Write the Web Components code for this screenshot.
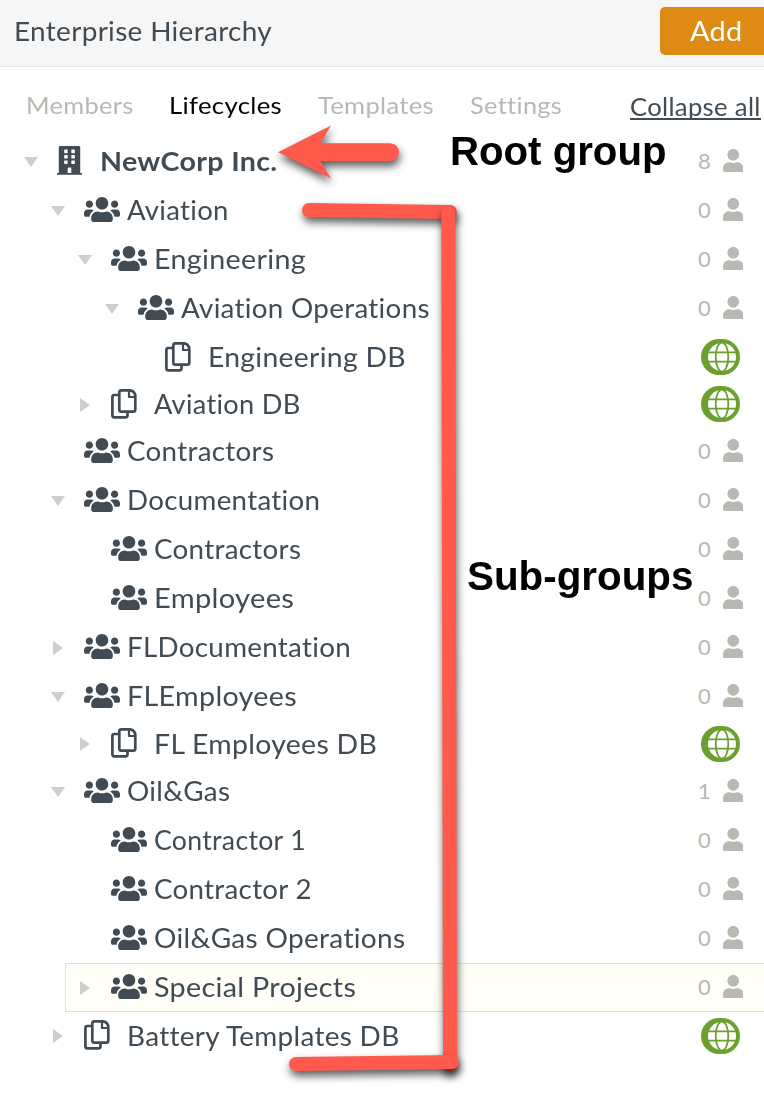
<!DOCTYPE html>
<html lang="en">
<head>
<meta charset="utf-8">
<title>Enterprise Hierarchy</title>
<style>
html,body{margin:0;padding:0;background:#fff;overflow:hidden}
body{font-family:Lato,"Open Sans",sans-serif;color:#414b53;font-variant-ligatures:none}
</style>
</head>
<body>
<hierarchy-app></hierarchy-app>
<script>
const make = (host, html) => {
  const t = document.createElement('template');
  t.innerHTML = html;
  host.attachShadow({mode:'open'}).append(t.content.cloneNode(true));
  return host.shadowRoot;
};

/* Text whose letters widen to fill the width given in "w". */
customElements.define('fit-text', class extends HTMLElement {
  connectedCallback() {
    if (!this.shadowRoot) make(this, `<style>:host{display:inline-block;white-space:nowrap}span{display:inline-block;transform-origin:0 50%}</style><span><slot></slot></span>`);
    const s = this.shadowRoot.querySelector('span');
    const w = +this.getAttribute('w');
    if (w) {
      s.style.transform = `scaleX(${(w / s.offsetWidth).toFixed(4)})`;
      this.style.width = w + 'px';
    }
  }
});

const ICONS = {
  group: [36, 25.2, '0 32 640 448', '<path d="M96 224c35.3 0 64-28.7 64-64s-28.7-64-64-64-64 28.7-64 64 28.7 64 64 64zm448 0c35.3 0 64-28.7 64-64s-28.7-64-64-64-64 28.7-64 64 28.7 64 64 64zm32 32h-64c-17.6 0-33.5 7.1-45.1 18.6 40.3 22.1 68.9 62 75.1 109.4h66c17.7 0 32-14.3 32-32v-32c0-35.3-28.7-64-64-64zm-256 0c61.9 0 112-50.1 112-112S381.9 32 320 32 208 82.1 208 144s50.1 112 112 112zm76.8 32h-8.3c-20.8 10-43.9 16-68.5 16s-47.6-6-68.5-16h-8.3C179.6 288 128 339.6 128 403.2V432c0 26.5 21.5 48 48 48h288c26.5 0 48-21.5 48-48v-28.8c0-63.6-51.6-115.2-115.2-115.2zm-223.7-13.4C161.5 263.1 145.6 256 128 256H64c-35.3 0-64 28.7-64 64v32c0 17.7 14.3 32 32 32h65.9c6.3-47.4 34.9-87.3 75.2-109.4z"/>'],
  user: [20.5, 23.4, '0 0 448 512', '<path d="M224 256c70.7 0 128-57.3 128-128S294.7 0 224 0 96 57.3 96 128s57.3 128 128 128zm89.6 32h-16.7c-22.2 10.2-46.9 16-72.9 16s-50.6-5.8-72.9-16h-16.7C60.2 288 0 348.2 0 422.4V464c0 26.5 21.5 48 48 48h352c26.5 0 48-21.5 48-48v-41.6c0-74.2-60.2-134.4-134.4-134.4z"/>'],
  building: [25, 28.8, '0 0 448 512', '<path fill-rule="evenodd" d="M436 480h-20V24c0-13.3-10.7-24-24-24H56C42.700 0 32 10.700 32 24v456H12c-6.600 0-12 5.400-12 12v20h448v-20c0-6.600-5.400-12-12-12zM128 76c0-6.600 5.400-12 12-12h40c6.600 0 12 5.400 12 12v40c0 6.600-5.400 12-12 12h-40c-6.600 0-12-5.400-12-12zm0 96c0-6.600 5.400-12 12-12h40c6.600 0 12 5.400 12 12v40c0 6.600-5.400 12-12 12h-40c-6.600 0-12-5.400-12-12zm52 148h-40c-6.600 0-12-5.400-12-12v-40c0-6.600 5.400-12 12-12h40c6.600 0 12 5.400 12 12v40c0 6.600-5.400 12-12 12zm76 160h-64v-84c0-6.600 5.400-12 12-12h40c6.600 0 12 5.400 12 12zm64-172c0 6.600-5.400 12-12 12h-40c-6.600 0-12-5.400-12-12v-40c0-6.600 5.400-12 12-12h40c6.600 0 12 5.400 12 12zm0-96c0 6.600-5.400 12-12 12h-40c-6.600 0-12-5.400-12-12v-40c0-6.600 5.400-12 12-12h40c6.600 0 12 5.400 12 12zm0-96c0 6.600-5.400 12-12 12h-40c-6.600 0-12-5.400-12-12V76c0-6.600 5.400-12 12-12h40c6.600 0 12 5.400 12 12z"/>'],
  copy: [26, 30, '0 0 26 30', '<g fill="none" stroke="currentColor" stroke-width="2.7" stroke-linejoin="round"><path d="M8 6H3.200Q1.400 6 1.400 8V26.300Q1.400 28.300 3.200 28.300H14.500Q16.500 28.300 16.500 26.300V23"/><path d="M10.500 1.400H19Q24.300 2.300 24.300 7.500V20.500Q24.300 22.700 22.300 22.700H10.500Q8.300 22.700 8.300 20.500V3.500Q8.300 1.400 10.500 1.400Z"/><path stroke-width="2.2" d="M18 1.500V8H24.500"/></g>'],
  globe: [39, 36, '0 0 39 36', '<rect width="39" height="36" rx="18" fill="#6b9f2e"/><circle cx="21" cy="18" r="14" fill="#fff"/><g fill="none" stroke="#6b9f2e" stroke-width="1.800"><ellipse cx="21" cy="18" rx="6.300" ry="14.500"/><path d="M6 13.300H36M6 22.700H36"/></g>'],
  down: [14, 10, '0 0 14 10', '<path d="M0 0H14L7 10Z"/>'],
  right: [10, 14, '0 0 10 14', '<path d="M0 0V14L10 7Z"/>']
};
customElements.define('ui-icon', class extends HTMLElement {
  connectedCallback() {
    if (this.shadowRoot) return;
    const [w, h, box, body] = ICONS[this.getAttribute('name')];
    make(this, `<style>:host{display:inline-flex;flex:none}svg{display:block;fill:currentColor}</style><svg width="${w}" height="${h}" viewBox="${box}" preserveAspectRatio="none">${body}</svg>`);
  }
});

customElements.define('app-header', class extends HTMLElement {
  connectedCallback() {
    make(this, `<style>
      :host{display:flex;justify-content:space-between;align-items:flex-start;box-sizing:border-box;height:67px;background:#f6f6f6;border-bottom:1px solid #e2e2e2;padding:7px 0 0 14px;font-size:26.5px;line-height:48px;letter-spacing:.3px}
      button{font:inherit;letter-spacing:inherit;font-size:27px;color:#fff;background:#dd8b14;border:0;border-radius:5px 0 0 5px;width:104px;height:48px;padding:0 0 1px 30px;text-align:left;line-height:47px}
    </style><fit-text w="258.5">Enterprise Hierarchy</fit-text><button><fit-text w="52.5">Add</fit-text></button>`);
  }
});

customElements.define('tab-bar', class extends HTMLElement {
  connectedCallback() {
    make(this, `<style>
      :host{display:flex;box-sizing:border-box;height:69px;padding:22px 0 0 26px;font-size:24px;line-height:31px;color:#b9b8b3;letter-spacing:.3px}
      nav{display:flex;flex:1}
      nav>*{flex:none}
      .on{color:#000;margin:0 36px 0 35px}
      .set{margin-left:36px}
      a{color:#414b53;font-size:24.500px;line-height:35px;margin-right:3px;border-bottom:2px solid #414b53;height:28.5px}
    </style><nav><fit-text w="108">Members</fit-text><fit-text class="on" w="112.500">Lifecycles</fit-text><fit-text w="116">Templates</fit-text><fit-text class="set" w="92">Settings</fit-text></nav><a><fit-text w="131">Collapse all</fit-text></a>`);
  }
});

customElements.define('tree-row', class extends HTMLElement {
  connectedCallback() {
    const g = n => this.getAttribute(n);
    const lv = +g('level'), icon = g('icon'), open = g('state');
    make(this, `<style>
      :host{display:flex;align-items:center;box-sizing:border-box;height:${g('h') || 49}px;padding-left:${24 + 27 * lv}px;font-size:27px;line-height:45px;--tw:#cfcecb}
      :host([selected]){margin:1px 0 -1px 65px;padding:0 0 2px ${24 + 27 * lv - 66}px;background:#fffff7;border:1px solid #dedfda;border-right:0}
      .tw{display:flex;justify-content:center;width:14px;margin-right:19px;color:var(--tw);padding-top:2px}
      .ic{display:flex;width:43px;color:#414b53}
      .lb{flex:1;letter-spacing:.3px;padding-bottom:${icon === 'copy' ? 0 : 1}px}
      .lb.b{font-weight:700}
      .ct{display:flex;align-items:center;color:#b9b8b3;font-size:22px;width:66.5px}
      .ct fit-text{width:24.5px;padding-left:.5px;text-align:left}
      .gl{width:63px;display:flex;padding-top:1px}
    </style>
    <span class="tw">${open ? `<ui-icon name="${open}"></ui-icon>` : ''}</span>
    <span class="ic"><ui-icon name="${icon}"></ui-icon></span>
    <span class="lb ${lv ? '' : 'b'}"></span>
    ${g('count') === null ? '<span class="gl"><ui-icon name="globe"></ui-icon></span>' : `<span class="ct"><fit-text>${g('count')}</fit-text><ui-icon name="user"></ui-icon></span>`}`);
    const label = document.createElement('fit-text');
    label.setAttribute('w', g('w') - 1);
    label.textContent = g('label');
    this.shadowRoot.querySelector('.lb').append(label);
  }
});

customElements.define('callout-layer', class extends HTMLElement {
  connectedCallback() {
    make(this, `<style>
      :host{position:absolute;inset:0;pointer-events:none}
      svg{position:absolute;left:0;top:0}
      .note{position:absolute;font:bold 40px/46px "Liberation Sans",Arial,sans-serif;color:#000}
      g{filter:drop-shadow(1px 5px 4px rgba(0,0,0,.65))}
    </style>
    <svg width="764" height="1102" viewBox="0 0 764 1102">
      <g><path fill="#ff5a4b" d="M278 152.300L331 125.500L320.500 143.200H390A9 9 0 0 1 390 161.200H320.500L331 178.500Z"/></g>
      <g fill="none" stroke="#ff5a4b" stroke-width="14" stroke-linecap="round"><path d="M309 210L450 212"/></g>
      <g fill="none" stroke="#ff5a4b" stroke-width="14" stroke-linecap="round"><path d="M448.300 213L450 1065"/></g>
      <g fill="none" stroke="#ff5a4b" stroke-width="14" stroke-linecap="round"><path d="M296 1064L452 1062"/></g>
    </svg>
    <fit-text class="note" style="left:450px;top:128px" w="217">Root group</fit-text>
    <fit-text class="note" style="left:467px;top:553px" w="226">Sub-groups</fit-text>`);
  }
});

const ROWS = [
  [0,'building','down','NewCorp Inc.',178,8],
  [1,'group','down','Aviation',103,0],
  [2,'group','down','Engineering',153,0],
  [3,'group','down','Aviation Operations',250,0],
  [4,'copy','','Engineering DB',199,null,49],
  [2,'copy','right','Aviation DB',148,null,45],
  [1,'group','','Contractors',148,0],
  [1,'group','down','Documentation',194,0],
  [2,'group','','Contractors',148,0],
  [2,'group','','Employees',141,0],
  [1,'group','right','FLDocumentation',225,0],
  [1,'group','down','FLEmployees',171,0],
  [2,'copy','right','FL Employees DB',224,null,46],
  [1,'group','down','Oil&amp;Gas',104,1],
  [2,'group','','Contractor 1',153,0],
  [2,'group','','Contractor 2',159,0],
  [2,'group','','Oil&amp;Gas Operations',252,0],
  [2,'group','right','Special Projects',203,0],
  [1,'copy','right','Battery Templates DB',274,null,48]
];
customElements.define('hierarchy-app', class extends HTMLElement {
  connectedCallback() {
    make(this, `<style>:host{display:block;position:relative;width:764px;height:1102px;overflow:hidden}</style>
    <app-header></app-header><tab-bar></tab-bar><main>${ROWS.map(([l,i,s,t,w,c,h]) =>
      `<tree-row level="${l}" icon="${i}" state="${s}" label="${t}" w="${w}"${c === null ? '' : ` count="${c}"`}${h ? ` h="${h}"` : ''}${t === 'Special Projects' ? ' selected' : ''}></tree-row>`).join('')}</main>
    <callout-layer></callout-layer>`);
  }
});
</script>
</body>
</html>
